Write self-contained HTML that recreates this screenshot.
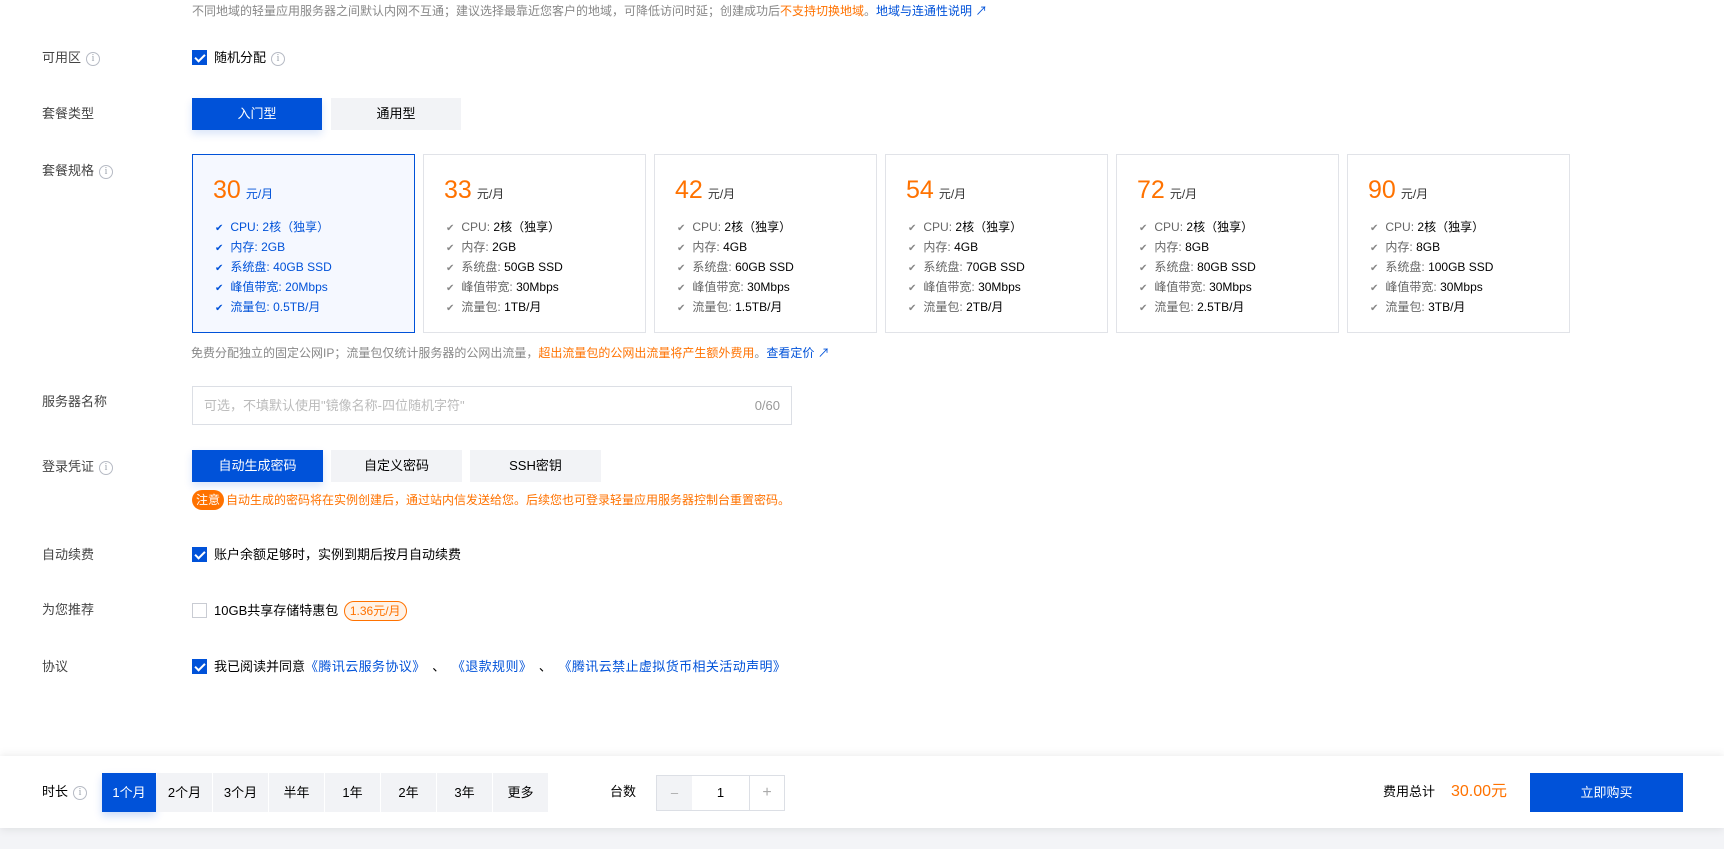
<!DOCTYPE html>
<html><head><meta charset="utf-8"><style>
*{box-sizing:border-box;margin:0;padding:0}
body{width:1724px;height:849px;background:#fff;font-family:"Liberation Sans","Noto Sans CJK SC",sans-serif;font-size:13px;color:#000;position:relative;overflow:hidden;line-height:18px}
.a{position:absolute}
.lbl{position:absolute;left:42px;color:#444;font-size:13px}
.info{display:inline-block;width:14px;height:14px;border:1.3px solid #b6bac4;border-radius:50%;color:#9aa0aa;font-size:10px;line-height:12px;text-align:center;vertical-align:1px;margin-left:5px;font-family:"Liberation Serif",serif}
.btn{position:absolute;height:32px;line-height:32px;text-align:center;font-size:13px;background:#f2f3f6;color:#000}
.btn.on{background:#0052d9;color:#fff;box-shadow:0 4px 8px rgba(0,82,217,.15)}
.chk{display:inline-block;width:15px;height:15px;background:#0052d9;vertical-align:-3px;margin-right:7px;position:relative}
.chk:after{content:"";position:absolute;left:4.5px;top:1.5px;width:4px;height:8px;border:solid #fff;border-width:0 2px 2px 0;transform:rotate(45deg)}
.unchk{display:inline-block;width:15px;height:15px;border:1px solid #c9ccd3;vertical-align:-3px;margin-right:7px}
.card{position:absolute;top:154px;width:223px;height:179px;border:1px solid #e1e3e8;background:#fff}
.card.on{border-color:#0052d9;background:#f5f8ff}
.price{position:absolute;left:20px;top:20px;color:#ff7200;font-size:25px;line-height:30px}
.price span{font-size:12px;color:#333;margin-left:5px}
.card.on .price span{color:#0052d9}
.feat{position:absolute;left:22px;top:62px;font-size:12px;color:#000}
.feat div{height:20px;line-height:20px;overflow:hidden;white-space:nowrap}
.feat div:before{content:"✔";color:#888;font-size:10px;margin-right:7px}
.feat b{font-weight:normal;color:#666}
.card.on .feat,.card.on .feat b,.card.on .feat div:before{color:#0052d9}
.ft{position:absolute;top:773px;height:39px;line-height:39px;width:55px;text-align:center;background:#f2f3f6;font-size:13px}
</style></head><body>
<div class="a" style="left:192px;top:2px;font-size:12px;color:#888">不同地域的轻量应用服务器之间默认内网不互通；建议选择最靠近您客户的地域，可降低访问时延；创建成功后<span style="color:#ff7200">不支持切换地域</span>。<span style="color:#0052d9">地域与连通性说明 ↗</span></div>

<div class="lbl" style="top:49px">可用区<span class="info">i</span></div>
<div class="a" style="left:192px;top:49px"><span class="chk"></span>随机分配<span class="info">i</span></div>

<div class="lbl" style="top:105px">套餐类型</div>
<div class="btn on" style="left:192px;top:98px;width:130px">入门型</div>
<div class="btn" style="left:331px;top:98px;width:130px">通用型</div>

<div class="lbl" style="top:162px">套餐规格<span class="info">i</span></div>
<div class="card on" style="left:192px"><div class="price">30<span>元/月</span></div><div class="feat"><div><b>CPU:</b> 2核（独享）</div><div><b>内存:</b> 2GB</div><div><b>系统盘:</b> 40GB SSD</div><div><b>峰值带宽:</b> 20Mbps</div><div><b>流量包:</b> 0.5TB/月</div></div></div>
<div class="card" style="left:423px"><div class="price">33<span>元/月</span></div><div class="feat"><div><b>CPU:</b> 2核（独享）</div><div><b>内存:</b> 2GB</div><div><b>系统盘:</b> 50GB SSD</div><div><b>峰值带宽:</b> 30Mbps</div><div><b>流量包:</b> 1TB/月</div></div></div>
<div class="card" style="left:654px"><div class="price">42<span>元/月</span></div><div class="feat"><div><b>CPU:</b> 2核（独享）</div><div><b>内存:</b> 4GB</div><div><b>系统盘:</b> 60GB SSD</div><div><b>峰值带宽:</b> 30Mbps</div><div><b>流量包:</b> 1.5TB/月</div></div></div>
<div class="card" style="left:885px"><div class="price">54<span>元/月</span></div><div class="feat"><div><b>CPU:</b> 2核（独享）</div><div><b>内存:</b> 4GB</div><div><b>系统盘:</b> 70GB SSD</div><div><b>峰值带宽:</b> 30Mbps</div><div><b>流量包:</b> 2TB/月</div></div></div>
<div class="card" style="left:1116px"><div class="price">72<span>元/月</span></div><div class="feat"><div><b>CPU:</b> 2核（独享）</div><div><b>内存:</b> 8GB</div><div><b>系统盘:</b> 80GB SSD</div><div><b>峰值带宽:</b> 30Mbps</div><div><b>流量包:</b> 2.5TB/月</div></div></div>
<div class="card" style="left:1347px"><div class="price">90<span>元/月</span></div><div class="feat"><div><b>CPU:</b> 2核（独享）</div><div><b>内存:</b> 8GB</div><div><b>系统盘:</b> 100GB SSD</div><div><b>峰值带宽:</b> 30Mbps</div><div><b>流量包:</b> 3TB/月</div></div></div>

<div class="a" style="left:191px;top:344px;font-size:12px;color:#888">免费分配独立的固定公网IP；流量包仅统计服务器的公网出流量，<span style="color:#ff7200">超出流量包的公网出流量将产生额外费用</span>。<span style="color:#0052d9">查看定价 ↗</span></div>

<div class="lbl" style="top:393px">服务器名称</div>
<div class="a" style="left:192px;top:386px;width:600px;height:39px;border:1px solid #dcdfe5;font-size:13px;color:#bbb;line-height:37px;padding-left:11px">可选，不填默认使用"镜像名称-四位随机字符"<span style="position:absolute;right:11px;color:#999">0/60</span></div>

<div class="lbl" style="top:458px">登录凭证<span class="info">i</span></div>
<div class="btn on" style="left:192px;top:450px;width:131px">自动生成密码</div>
<div class="btn" style="left:331px;top:450px;width:131px">自定义密码</div>
<div class="btn" style="left:470px;top:450px;width:131px">SSH密钥</div>
<div class="a" style="left:192px;top:490px;font-size:12px;color:#ff7200;line-height:20px"><span style="display:inline-block;background:#ff7200;color:#fff;border-radius:10px;padding:0 4px;margin-right:2px">注意</span>自动生成的密码将在实例创建后，通过站内信发送给您。后续您也可登录轻量应用服务器控制台重置密码。</div>

<div class="lbl" style="top:546px">自动续费</div>
<div class="a" style="left:192px;top:546px"><span class="chk"></span>账户余额足够时，实例到期后按月自动续费</div>

<div class="lbl" style="top:601px">为您推荐</div>
<div class="a" style="left:192px;top:601px"><span class="unchk"></span>10GB共享存储特惠包 <span style="display:inline-block;border:1px solid #ff7200;color:#ff7200;background:#fff3e8;border-radius:10px;padding:0 5px;font-size:12px;line-height:18px;margin-left:2px">1.36元/月</span></div>

<div class="lbl" style="top:658px">协议</div>
<div class="a" style="left:192px;top:658px;word-spacing:3px"><span class="chk"></span>我已阅读并同意<span style="color:#0052d9;letter-spacing:.4px">《腾讯云服务协议》</span> 、 <span style="color:#0052d9;letter-spacing:.4px">《退款规则》</span> 、 <span style="color:#0052d9;letter-spacing:.4px">《腾讯云禁止虚拟货币相关活动声明》</span></div>

<div class="a" style="left:0;top:828px;width:1724px;height:21px;background:#f3f4f7"></div>
<div class="a" style="left:0;top:756px;width:1724px;height:72px;background:#fff;box-shadow:0 -3px 8px rgba(0,0,0,.05),0 3px 8px rgba(0,0,0,.06)"></div>
<div class="a" style="left:42px;top:783px">时长<span class="info">i</span></div>
<div class="ft" style="left:102px;background:#0052d9;color:#fff;width:54px;box-shadow:0 4px 8px rgba(0,82,217,.2)">1个月</div>
<div class="ft" style="left:157px">2个月</div>
<div class="ft" style="left:213px">3个月</div>
<div class="ft" style="left:269px">半年</div>
<div class="ft" style="left:325px">1年</div>
<div class="ft" style="left:381px">2年</div>
<div class="ft" style="left:437px">3年</div>
<div class="ft" style="left:493px">更多</div>
<div class="a" style="left:610px;top:783px">台数</div>
<div class="a" style="left:656px;top:775px;width:129px;height:36px;border:1px solid #dcdfe5;display:flex;line-height:34px;text-align:center">
<div style="width:35px;background:#f2f3f6;color:#aaa">–</div><div style="flex:1;border-right:1px solid #dcdfe5">1</div><div style="width:34px;color:#aaa;font-size:16px">+</div></div>
<div class="a" style="left:1383px;top:783px">费用总计</div>
<div class="a" style="left:1451px;top:783px;color:#ff7200;font-size:16px">30.00元</div>
<div class="a" style="left:1530px;top:773px;width:153px;height:39px;background:#0052d9;color:#fff;text-align:center;line-height:39px">立即购买</div>
</body></html>
